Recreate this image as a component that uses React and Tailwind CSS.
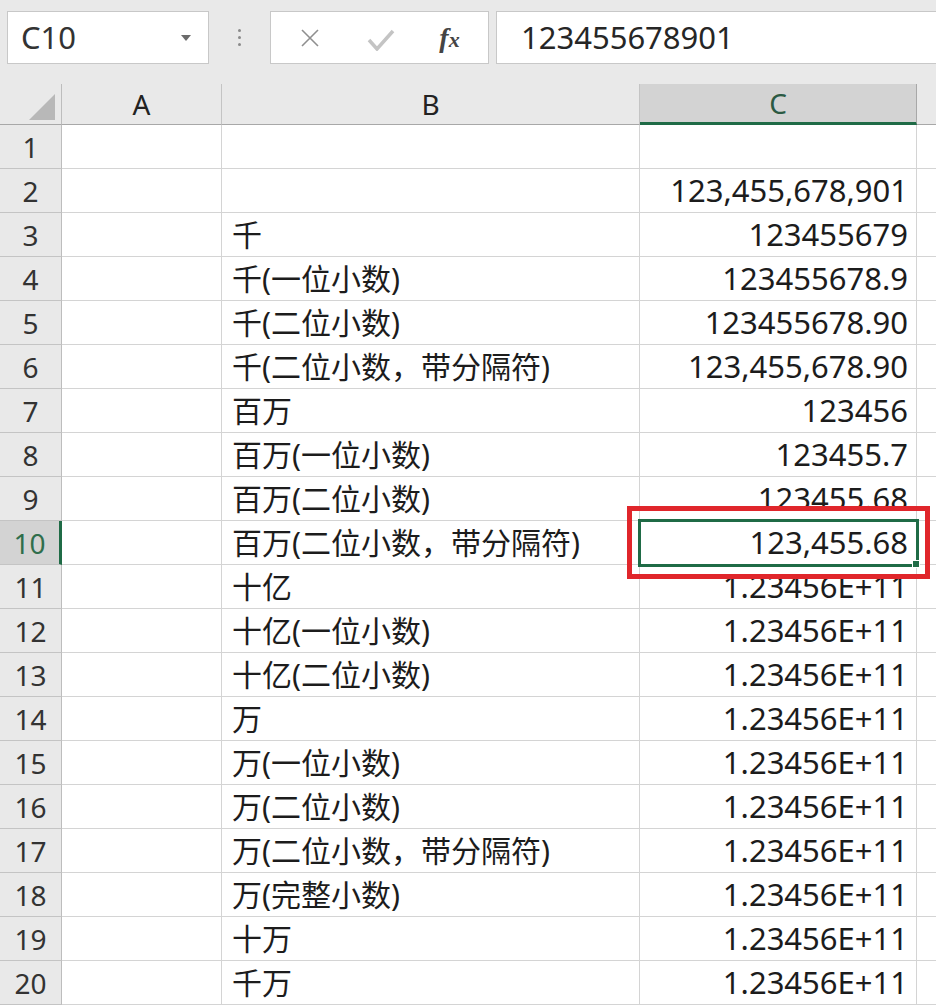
import React from "react";

const rows = [
  ["", ""],
  ["", "123,455,678,901"],
  ["千", "123455679"],
  ["千(一位小数)", "123455678.9"],
  ["千(二位小数)", "123455678.90"],
  ["千(二位小数，带分隔符)", "123,455,678.90"],
  ["百万", "123456"],
  ["百万(一位小数)", "123455.7"],
  ["百万(二位小数)", "123455.68"],
  ["百万(二位小数，带分隔符)", "123,455.68"],
  ["十亿", "1.23456E+11"],
  ["十亿(一位小数)", "1.23456E+11"],
  ["十亿(二位小数)", "1.23456E+11"],
  ["万", "1.23456E+11"],
  ["万(一位小数)", "1.23456E+11"],
  ["万(二位小数)", "1.23456E+11"],
  ["万(二位小数，带分隔符)", "1.23456E+11"],
  ["万(完整小数)", "1.23456E+11"],
  ["十万", "1.23456E+11"],
  ["千万", "1.23456E+11"],
];

const font = { fontFamily: '"Noto Sans", "Noto Sans CJK SC", sans-serif' };

const FormulaBar = () => {
  return (
    <div className="h-[84px] bg-[#e9e9e9] flex items-start pt-[11px] pl-[7px] gap-0">
      <div className="w-[202px] h-[53px] bg-white border border-[#c8c8c8] flex items-center justify-between pl-[13px] pr-[16px]">
        <span className="text-[31px] text-[#333]">C10</span>
        <svg width="12" height="8" viewBox="0 0 12 8">
          <path d="M1 1 L11 1 L6 7 Z" fill="#6b6b6b" />
        </svg>
      </div>
      <div className="w-[61px] h-[53px] flex flex-col items-center justify-center gap-[4px]">
        <span className="w-[3px] h-[3px] rounded-full bg-[#8a8a8a]" />
        <span className="w-[3px] h-[3px] rounded-full bg-[#8a8a8a]" />
        <span className="w-[3px] h-[3px] rounded-full bg-[#8a8a8a]" />
      </div>
      <div className="w-[219px] h-[53px] bg-white border border-[#c8c8c8] flex items-center">
        <div className="w-[76px] flex justify-center pl-[2px]">
          <svg width="20" height="20" viewBox="0 0 20 20">
            <path d="M2 2 L18 18 M18 2 L2 18" stroke="#8f8f8f" strokeWidth="1.6" fill="none" />
          </svg>
        </div>
        <div className="w-[68px] flex justify-center pt-[4px]">
          <svg width="28" height="22" viewBox="0 0 28 22">
            <path d="M2 11 L10 20 L26 2" stroke="#c4c4c4" strokeWidth="3.5" fill="none" />
          </svg>
        </div>
        <div className="flex-1 flex justify-center pr-[4px]">
          <span
            className="text-[28px] italic font-semibold text-[#444] leading-none"
            style={{ fontFamily: '"Liberation Serif", serif' }}
          >
            f<span className="text-[22px]">x</span>
          </span>
        </div>
      </div>
      <div className="flex-1 ml-[7px] h-[53px] bg-white border border-[#c8c8c8] border-r-0 flex items-center pl-[24px]">
        <span className="text-[31px] text-[#262626]">123455678901</span>
      </div>
    </div>
  );
};

const App = () => {
  return (
    <div className="w-[936px] h-[1007px] overflow-hidden bg-white relative" style={font}>
      <FormulaBar />
      <div className="grid grid-cols-[62px_160px_418px_277px_1fr]">
        {/* header row */}
        <div className="h-[41px] bg-[#e9e9e9] border-r border-[#bdbdbd] border-b border-b-[#a8a8a8] flex items-end justify-end pr-[6px] pb-[4px]">
          <svg width="26" height="26" viewBox="0 0 26 26">
            <path d="M26 0 L26 26 L0 26 Z" fill="#b8b8b8" />
          </svg>
        </div>
        <div className="h-[41px] bg-[#e9e9e9] border-r border-[#c4c4c4] border-b border-b-[#a8a8a8] flex items-center justify-center text-[28px] text-[#222]">
          A
        </div>
        <div className="h-[41px] bg-[#e9e9e9] border-r border-[#c4c4c4] border-b border-b-[#a8a8a8] flex items-center justify-center text-[28px] text-[#222]">
          B
        </div>
        <div className="h-[41px] bg-[#d3d3d3] border-r border-[#a8a8a8] border-b-[3px] border-b-[#1f6b46] flex items-center justify-center text-[28px] text-[#2b5a43]">
          C
        </div>
        <div className="h-[41px] bg-[#e9e9e9] border-b border-b-[#a8a8a8]" />

        {rows.map((r, i) => {
          const sel = i === 9;
          return (
            <React.Fragment key={i}>
              <div
                className={
                  sel
                    ? "h-[44px] bg-[#d3d3d3] border-r-[3px] border-r-[#1f6b46] border-b border-b-[#c4c4c4] flex items-center justify-center text-[28px] text-[#2f6e4c]"
                    : "h-[44px] bg-[#e9e9e9] border-r border-r-[#bdbdbd] border-b border-b-[#c4c4c4] flex items-center justify-center text-[28px] text-[#333]"
                }
              >
                {i + 1}
              </div>
              <div className="h-[44px] border-r border-b border-[#d4d4d4]" />
              <div className="h-[44px] border-r border-b border-[#d4d4d4] flex items-center pl-[10px] text-[30px] text-[#1c1c1c] whitespace-nowrap">
                {r[0]}
              </div>
              <div className="h-[44px] border-r border-b border-[#d4d4d4] flex items-center justify-end pr-[8px] text-[31px] text-[#1c1c1c] whitespace-nowrap">
                {r[1]}
              </div>
              <div className="h-[44px] border-b border-[#d4d4d4]" />
            </React.Fragment>
          );
        })}
      </div>

      {/* active cell selection */}
      <div className="absolute left-[638px] top-[519px] w-[281px] h-[48px] border-[3px] border-[#1f6b46] pointer-events-none" />
      <div className="absolute left-[912px] top-[560px] w-[8px] h-[8px] bg-[#1f6b46] border border-white" />
      {/* red highlight */}
      <div className="absolute left-[627px] top-[506px] w-[303px] h-[73px] border-[5px] border-[#e0262b] pointer-events-none" />
    </div>
  );
};

export default App;
